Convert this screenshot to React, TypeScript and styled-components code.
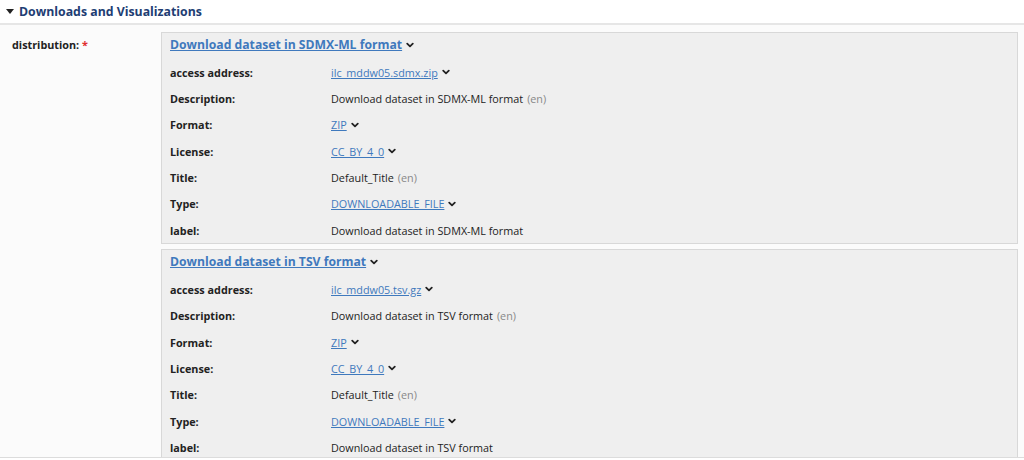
import React from "react";
import styled, { createGlobalStyle } from "styled-components";

const GlobalStyle = createGlobalStyle`
  html, body {
    margin: 0;
    padding: 0;
    background: #fff;
    font-family: "Open Sans", "DejaVu Sans", sans-serif;
    color: #222;
  }
`;

type Field = {
  label: string;
  value: string;
  link?: boolean;
  menu?: boolean;
  lang?: string;
};

type Distribution = {
  title: string;
  fields: Field[];
};

const distributions: Distribution[] = [
  {
    title: "Download dataset in SDMX-ML format",
    fields: [
      { label: "access address:", value: "ilc_mddw05.sdmx.zip", link: true, menu: true },
      { label: "Description:", value: "Download dataset in SDMX-ML format", lang: "(en)" },
      { label: "Format:", value: "ZIP", link: true, menu: true },
      { label: "License:", value: "CC_BY_4_0", link: true, menu: true },
      { label: "Title:", value: "Default_Title", lang: "(en)" },
      { label: "Type:", value: "DOWNLOADABLE_FILE", link: true, menu: true },
      { label: "label:", value: "Download dataset in SDMX-ML format" },
    ],
  },
  {
    title: "Download dataset in TSV format",
    fields: [
      { label: "access address:", value: "ilc_mddw05.tsv.gz", link: true, menu: true },
      { label: "Description:", value: "Download dataset in TSV format", lang: "(en)" },
      { label: "Format:", value: "ZIP", link: true, menu: true },
      { label: "License:", value: "CC_BY_4_0", link: true, menu: true },
      { label: "Title:", value: "Default_Title", lang: "(en)" },
      { label: "Type:", value: "DOWNLOADABLE_FILE", link: true, menu: true },
      { label: "label:", value: "Download dataset in TSV format" },
    ],
  },
];

const Chevron = () => (
  <ChevronIcon width="8" height="8" viewBox="0 0 10 10">
    <path d="M1.5 3.2 L5 6.7 L8.5 3.2" fill="none" stroke="#222" strokeWidth="2.2" strokeLinecap="round" strokeLinejoin="round" />
  </ChevronIcon>
);

const App = () => {
  return (
    <Page>
      <GlobalStyle />
      <SectionHeader>
        <svg width="8" height="6" viewBox="0 0 8 6">
          <polygon points="0,0 8,0 4,5" fill="#222" />
        </svg>
        <SectionTitle>Downloads and Visualizations</SectionTitle>
      </SectionHeader>
      <SectionBody>
        <PropertyLabel>
          distribution: <Required>*</Required>
        </PropertyLabel>
        <CardList>
          {distributions.map((d) => (
            <Card key={d.title}>
              <CardTitle>
                <TitleLink href="#">{d.title}</TitleLink>
                <Chevron />
              </CardTitle>
              {d.fields.map((f) => (
                <FieldRow key={f.label}>
                  <FieldLabel>{f.label}</FieldLabel>
                  <FieldValue>
                    {f.link ? <ValueLink href="#">{f.value}</ValueLink> : f.value}
                    {f.lang && <Lang>{f.lang}</Lang>}
                    {f.menu && <Chevron />}
                  </FieldValue>
                </FieldRow>
              ))}
            </Card>
          ))}
        </CardList>
      </SectionBody>
    </Page>
  );
};

export default App;

const Page = styled.div`
  width: 1024px;
  height: 460px;
  overflow: hidden;
`;

const SectionHeader = styled.div`
  display: flex;
  align-items: center;
  gap: 5px;
  height: 23px;
  padding-left: 6px;
  border-bottom: 2px solid #e6e6e6;
`;

const SectionTitle = styled.span`
  font-size: 12.3px;
  font-weight: 700;
  color: #213d73;
`;

const SectionBody = styled.div`
  display: flex;
  box-sizing: border-box;
  height: 433px;
  padding-top: 7px;
  padding-right: 6px;
  background: #fbfbfb;
  border-bottom: 1px solid #dcdcdc;
  overflow: hidden;
`;

const PropertyLabel = styled.div`
  width: 149px;
  flex-shrink: 0;
  padding-left: 12px;
  padding-top: 5px;
  font-size: 10.8px;
  font-weight: 700;
  color: #222;
`;

const Required = styled.span`
  color: #e03030;
`;

const CardList = styled.div`
  flex: 1;
  display: flex;
  flex-direction: column;
  gap: 5px;
`;

const Card = styled.div`
  flex-shrink: 0;
  background: #efefef;
  border: 1px solid #d8d8d8;
  padding: 0 8px;
`;

const CardTitle = styled.div`
  display: flex;
  align-items: center;
  gap: 4px;
  box-sizing: border-box;
  height: 26px;
  padding-bottom: 3px;
`;

const TitleLink = styled.a`
  font-size: 12.2px;
  font-weight: 700;
  color: #3f79bd;
  text-decoration: underline;
`;

const FieldRow = styled.div`
  display: grid;
  grid-template-columns: 161px 1fr;
  align-items: center;
  height: 26.33px;
  font-size: 10.8px;
`;

const FieldLabel = styled.div`
  font-weight: 700;
  color: #222;
`;

const FieldValue = styled.div`
  display: flex;
  align-items: center;
  gap: 4px;
  color: #222;
`;

const ValueLink = styled.a`
  color: #3f79bd;
  text-decoration: underline;
`;

const Lang = styled.span`
  color: #888;
`;

const ChevronIcon = styled.svg`
  flex-shrink: 0;
`;
